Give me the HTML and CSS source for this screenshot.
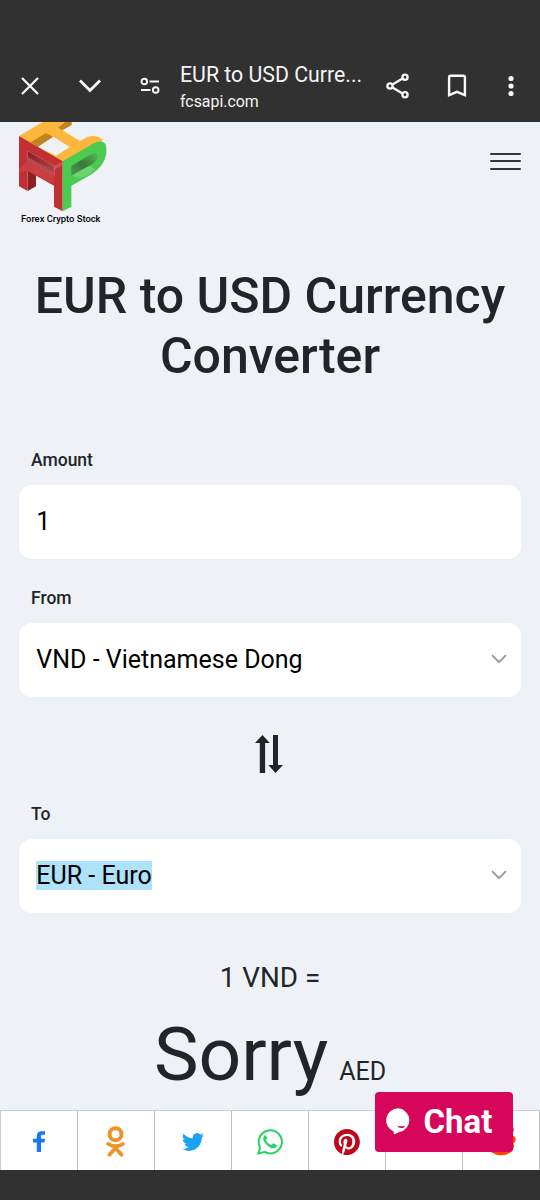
FILE: index.html
```html
<!DOCTYPE html>
<html lang="en">
<head>
<meta charset="utf-8">
<title>EUR to USD Currency Converter</title>
<link rel="stylesheet" href="styles.css">
</head>
<body>
<div class="screen">
  <header class="browser-bar">
    <svg class="close" width="20" height="20" viewBox="0 0 20 20"><path d="M2 2l16 16M18 2L2 18"/></svg>
    <svg class="collapse" width="24" height="16" viewBox="0 0 24 16"><path d="M2 2.500l10 10 10-10"/></svg>
    <svg class="tune" width="20" height="18" viewBox="0 0 20 18"><circle cx="4.300" cy="4.500" r="2.800"/><path d="M9.500 4.500H19M1 13h9.500"/><circle cx="15.700" cy="13" r="2.800"/></svg>
    <div class="page-info">
      <div class="page-title">EUR to USD Curre...</div>
      <div class="page-host">fcsapi.com</div>
    </div>
    <svg class="share" width="24" height="26" viewBox="0 0 24 26"><path d="M6.500 11.500l10-6M6.500 14.500l10 6"/><circle cx="4" cy="13" r="2.600"/><circle cx="19" cy="4.300" r="2.600"/><circle cx="19" cy="21.700" r="2.600"/></svg>
    <svg class="bookmark" width="20" height="24" viewBox="0 0 20 24"><path d="M2.100 21.200V3.200q0-1.500 1.500-1.500h12.800q1.500 0 1.500 1.500v18L10 17.900z"/></svg>
    <svg class="more" width="8" height="22" viewBox="0 0 8 22"><circle cx="4" cy="3.500" r="2.600"/><circle cx="4" cy="11" r="2.600"/><circle cx="4" cy="18.500" r="2.600"/></svg>
  </header>
  <main class="page">
    <div class="site-head">
      <div class="brand">
        <svg class="logo" width="90" height="91" viewBox="54 36 270 273">
          <defs>
            <linearGradient id="slot" x1="0" y1="1" x2="1" y2="0"><stop offset="0" stop-color="#4f9550"/><stop offset=".5" stop-color="#3a7a3d"/><stop offset="1" stop-color="#56ba58"/></linearGradient>
            <linearGradient id="bar" x1="0" y1="0" x2="1" y2="1"><stop offset="0" stop-color="#8a1a20"/><stop offset="1" stop-color="#b5474a"/></linearGradient>
          </defs>
          <path fill="#bf8420" d="M182 36h33v9l-31 18-22-10z"/>
          <path fill="#fdb73c" fill-rule="evenodd" d="M57 78L128 36h68l-22 17 66 40 22-12q28-8 46 8l-12 18-104 55zM112 110l56 27 42-26-54-33z"/>
          <path fill="#bf8420" d="M92 97l46-27 22 10-46 30z"/>
          <path fill="#8f2025" d="M83 183l25-5v51l-25 14z"/>
          <path fill="#c13033" fill-rule="evenodd" d="M57 78l131 76v150l-26-14v-63l-79-44v60l-26-14zM83 123v28l80 45v-28z"/>
          <path fill="url(#bar)" d="M83 123l80 45v28l-80-45z"/>
          <path fill="#b04a4c" d="M83 140l80 45v11l-80-45z"/>
          <path fill="#d75a5c" opacity=".35" d="M57 178l26-27 80 45v24l-22-6-33-18-25-13-26 5z"/>
          <path fill="#e06a6b" opacity=".55" d="M163 168l25-14v10l-25 16z"/>
          <path fill="#4bcb50" d="M188 154l78-45q34-24 50-8 5 12 2 35-8 34-43 57l-61 34v63l-26 14z"/>
          <path fill="url(#slot)" d="M214 168l54-32q24-14 24 3 0 13-16 24l-62 34z"/>
          <path fill="#8ae08a" opacity=".5" d="M214 197l54-30 18 10-20 18-28 10z"/>
        </svg>
        <div class="brand-name">Forex Crypto Stock</div>
      </div>
      <div class="menu"><i></i><i></i><i></i></div>
    </div>
    <h1 class="heading">EUR to USD Currency Converter</h1>
    <div class="field">
      <div class="label">Amount</div>
      <div class="control">1</div>
    </div>
    <div class="field">
      <div class="label">From</div>
      <div class="control">VND - Vietnamese Dong
        <svg class="arrow" width="16" height="10" viewBox="0 0 16 10"><path d="M1 1.200l7 7 7-7"/></svg>
      </div>
    </div>
    <div class="swap">
      <svg width="28" height="38" viewBox="0 0 28 38"><path d="M7.500 0l7.300 8h-4.700v30H4.800V8H0zM18 0h5v30h5l-7.500 8-7.200-8H18z"/></svg>
    </div>
    <div class="field">
      <div class="label">To</div>
      <div class="control"><span class="selected">EUR - Euro</span>
        <svg class="arrow" width="16" height="10" viewBox="0 0 16 10"><path d="M1 1.200l7 7 7-7"/></svg>
      </div>
    </div>
    <div class="rate">1 VND =</div>
    <div class="result"><span class="value">Sorry</span><span class="unit">AED</span></div>
  </main>
  <footer class="share-bar">
    <div class="net"><svg width="12" height="21" viewBox="0 0 12 21"><path fill="#1877f2" d="M3.800 21v-9.500H0V7.800h3.800V5.100C3.800 1.800 5.600.3 8.600.3H12v3.500H9.800c-1.400 0-1.800.6-1.800 1.900v2.100h4l-.5 3.700H8V21z"/></svg></div>
    <div class="net"><svg width="19" height="31" viewBox="0 0 19 31"><g fill="none" stroke="#f09228" stroke-linecap="round" stroke-linejoin="round"><circle cx="9.500" cy="8.200" r="6" stroke-width="4"/><path stroke-width="3.800" d="M2.200 18q7.300 4.500 14.600 0M9.500 22L3.500 28.800M9.500 22l6 6.800"/></g></svg></div>
    <div class="net"><svg width="22" height="19" viewBox="0 1.500 24 20"><path fill="#1da1f2" d="M23.950 4.570a10 10 0 0 1-2.820.77 4.960 4.960 0 0 0 2.160-2.720c-.95.550-2 .96-3.130 1.180a4.920 4.920 0 0 0-8.380 4.480C7.690 8.090 4.070 6.130 1.640 3.160a4.920 4.920 0 0 0 1.520 6.570 4.900 4.900 0 0 1-2.230-.61v.06a4.920 4.920 0 0 0 3.950 4.820 5 5 0 0 1-2.210.09 4.940 4.940 0 0 0 4.600 3.420A9.870 9.870 0 0 1 0 19.540a13.990 13.990 0 0 0 7.550 2.210c9.050 0 14-7.500 14-13.980 0-.21 0-.42-.02-.63a9.940 9.940 0 0 0 2.420-2.570z"/></svg></div>
    <div class="net"><svg width="26" height="26" viewBox="0 0 26 26"><path fill="none" stroke="#25d366" stroke-width="2" d="M1.400 24.600l1.700-6.200A11.600 11.600 0 1 1 7.500 22.900z"/><path fill="#25d366" d="M9 6.500c-.5-.4-1.200-.2-1.800.5-2 2.200-.7 4.700.9 6.900 2.600 3.600 6.700 6.300 9.700 5.100 1.800-.7 2.300-2 2-3l-3-1.500c-.6-.3-.9 0-1.500.8-.7.900-.9.900-1.700.5-2-.9-3.500-2.500-4.500-4.100-.5-.9.900-1.400 1-2.300z"/></svg></div>
    <div class="net"><svg width="26" height="26" viewBox="0 0 24 24"><path fill="#bd081c" d="M12 0C5.370 0 0 5.370 0 12c0 5.080 3.160 9.420 7.620 11.170-.1-.95-.2-2.410.04-3.440l1.410-5.960s-.36-.72-.36-1.780c0-1.670.97-2.920 2.170-2.920 1.030 0 1.520.77 1.520 1.700 0 1.030-.65 2.580-1 4.010-.28 1.200.6 2.180 1.790 2.180 2.140 0 3.790-2.260 3.790-5.520 0-2.890-2.080-4.900-5.040-4.900-3.430 0-5.450 2.570-5.450 5.230 0 1.040.4 2.150.9 2.750.1.120.11.230.08.350l-.33 1.360c-.5.220-.18.270-.4.160-1.500-.7-2.430-2.890-2.430-4.650 0-3.780 2.750-7.260 7.930-7.260 4.160 0 7.400 2.970 7.400 6.930 0 4.140-2.610 7.470-6.230 7.470-1.220 0-2.360-.63-2.750-1.380l-.75 2.850c-.27 1.040-1 2.350-1.490 3.150A12 12 0 1 0 12 0z"/></svg></div>
    <div class="net"></div>
    <div class="net"><svg width="31" height="29" viewBox="0 0 31 29"><g fill="#ff4500"><ellipse cx="16" cy="19" rx="13" ry="9.300"/><circle cx="4.200" cy="13" r="3.500"/><circle cx="27" cy="12.500" r="3.700"/><circle cx="26.300" cy="2.700" r="2.600"/></g></svg></div>
    <div class="chat">
      <svg width="25" height="27" viewBox="0 0 25 27"><path fill="#fff" d="M12.300.3a12 12 0 0 1 1 23.800l-5.300 2.500-.4-3.200A12 12 0 0 1 12.300.3z"/><path fill="#d6065a" d="M11.300 17.700q4.200 1.300 8-.3-1.200 2.700-4.200 2.700-2.800 0-3.800-2.400z"/></svg>
      <span>Chat</span>
    </div>
  </footer>
  <div class="nav-area"></div>
</div>
</body>
</html>
```
FILE: styles.css
```css
* { box-sizing: border-box; }
body { margin: 0; font-family: Roboto, sans-serif; color: #212529; }
svg { display: block; flex: none; }
.screen { width: 540px; height: 1200px; display: flex; flex-direction: column; overflow: hidden; background: #eef1f6; }

.browser-bar { height: 122px; flex: none; padding: 50px 0 0 20px; display: flex; align-items: center; background: #313131; color: #f4f4f4; white-space: nowrap; }
.browser-bar svg { fill: none; stroke: #f8f8f8; stroke-width: 2.300; }
.browser-bar .close { stroke-width: 2.300; }
.browser-bar .collapse { margin-left: 38px; stroke-width: 2.800; }
.browser-bar .tune { margin-left: 38px; stroke-width: 1.900; }
.page-info { width: 204px; padding: 3px 0 0 20px; }
.page-title { font-size: 21.300px; line-height: 28px; }
.page-host { font-size: 15.900px; line-height: 26px; }
.browser-bar .share { margin-left: 22px; }
.browser-bar .bookmark { margin-left: 37px; stroke-width: 2.400; }
.browser-bar .more { margin-left: 40px; fill: #f8f8f8; stroke: none; }

.page { height: 988px; flex: none; padding: 0 19px; }
.site-head { height: 144px; display: flex; justify-content: space-between; }
.logo { margin-left: -1px; }
.brand-name { font-size: 9.400px; line-height: 11px; font-weight: 500; color: #000; padding-left: 2px; white-space: nowrap; }
.menu { width: 31.500px; padding-top: 30.700px; display: flex; flex-direction: column; gap: 5.200px; }
.menu i { height: 2.300px; flex: none; background: #30363a; border-radius: 1px; }
.heading { margin: 0 0 63px; font-size: 50px; line-height: 60px; font-weight: 500; text-align: center; }
.label { height: 26px; margin: 0 0 10px 12px; font-size: 17.500px; line-height: 22px; font-weight: 500; }
.field { margin-bottom: 28px; }
.control { height: 74px; border-radius: 13px; background: #fff; padding: 0 14px 1px 17.300px; display: flex; align-items: center; justify-content: space-between; font-size: 25px; color: #000; }
.selected { background: #ade2f8; }
.arrow { fill: none; stroke: #999; stroke-width: 1.900; margin-bottom: 2px; }
.swap { height: 106px; margin-top: -28px; padding-top: 38px; }
.swap svg { margin-left: 236px; fill: #212529; }
.rate { margin-top: 47px; font-size: 27.800px; line-height: 36px; text-align: center; }
.result { margin-top: 13px; display: flex; justify-content: center; align-items: baseline; line-height: 90px; }
.value { font-size: 75px; }
.unit { font-size: 25px; margin-left: 11px; }

.share-bar { position: relative; height: 60px; flex: none; display: grid; grid-template-columns: repeat(7, 1fr); background: #fff; border-top: 1px solid #ccc; border-left: 1px solid #ccc; }
.net { display: flex; align-items: center; justify-content: center; padding: 2px 1px 0 0; border-right: 1px solid #c2c0c2; }
.chat { position: absolute; left: 374px; top: -19px; width: 137.500px; height: 60px; border-radius: 4px; background: #d6065a; color: #fff; display: flex; align-items: center; gap: 12.500px; padding: 0 0 1px 11px; font-size: 33px; font-weight: 700; }
.nav-area { flex: 1; background: #313131; }
```
